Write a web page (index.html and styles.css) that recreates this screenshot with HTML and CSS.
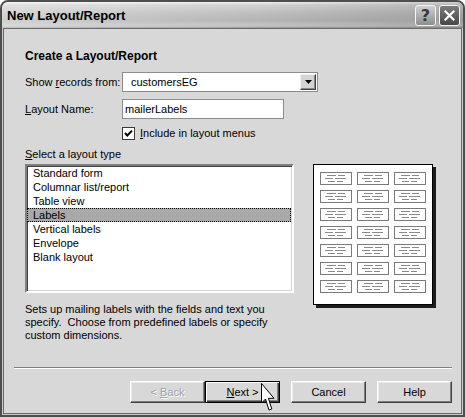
FILE: index.html
```html
<!DOCTYPE html>
<html>
<head>
<meta charset="utf-8">
<title>New Layout/Report</title>
<link rel="stylesheet" href="styles.css">
</head>
<body>
<svg width="0" height="0" class="defs" aria-hidden="true">
  <symbol id="lblLines" viewBox="0 0 30 11">
    <g stroke="#8a8a8a" stroke-width="1">
      <path d="M6 2.5H15M17 2.5H24"/>
      <path d="M4 5.5H12M14 5.5H25"/>
      <path d="M7 8.5H14M16 8.5H22"/>
    </g>
  </symbol>
</svg>
<div class="window">
  <div class="titlebar">
    <span class="title">New Layout/Report</span>
    <div class="tbtns">
      <span class="tb help">?</span>
      <span class="tb close"><svg width="11" height="11" viewBox="0 0 11 11"><path d="M1.5 1.5L9.5 9.5M9.5 1.5L1.5 9.5" stroke="#fff" stroke-width="2.2" stroke-linecap="square"/></svg></span>
    </div>
  </div>
  <div class="body">
    <div class="content">
      <div class="main">
        <div class="heading">Create a Layout/Report</div>
        <div class="form">
          <span class="flabel">Show <u>r</u>ecords from:</span>
          <div class="select"><span>customersEG</span><span class="dd"><svg width="7" height="4" viewBox="0 0 7 4"><polygon points="0,0 7,0 3.5,4" fill="#000"/></svg></span></div>
          <span class="flabel"><u>L</u>ayout Name:</span>
          <div class="input">mailerLabels</div>
          <span></span>
          <div class="check"><span class="box"><svg width="11" height="11" viewBox="0 0 11 11"><path d="M2 5L4.3 7.5L9 2.6" fill="none" stroke="#000" stroke-width="2"/></svg></span><span><u>I</u>nclude in layout menus</span></div>
        </div>
        <div class="types">
          <div class="types-label"><u>S</u>elect a layout type</div>
          <div class="list">
            <div class="item">Standard form</div>
            <div class="item">Columnar list/report</div>
            <div class="item">Table view</div>
            <div class="item sel">Labels</div>
            <div class="item">Vertical labels</div>
            <div class="item">Envelope</div>
            <div class="item">Blank layout</div>
          </div>
          <div class="preview">
            <div class="paper">
              <span class="lbl"><svg><use href="#lblLines"/></svg></span><span class="lbl"><svg><use href="#lblLines"/></svg></span><span class="lbl"><svg><use href="#lblLines"/></svg></span>
              <span class="lbl"><svg><use href="#lblLines"/></svg></span><span class="lbl"><svg><use href="#lblLines"/></svg></span><span class="lbl"><svg><use href="#lblLines"/></svg></span>
              <span class="lbl"><svg><use href="#lblLines"/></svg></span><span class="lbl"><svg><use href="#lblLines"/></svg></span><span class="lbl"><svg><use href="#lblLines"/></svg></span>
              <span class="lbl"><svg><use href="#lblLines"/></svg></span><span class="lbl"><svg><use href="#lblLines"/></svg></span><span class="lbl"><svg><use href="#lblLines"/></svg></span>
              <span class="lbl"><svg><use href="#lblLines"/></svg></span><span class="lbl"><svg><use href="#lblLines"/></svg></span><span class="lbl"><svg><use href="#lblLines"/></svg></span>
              <span class="lbl"><svg><use href="#lblLines"/></svg></span><span class="lbl"><svg><use href="#lblLines"/></svg></span><span class="lbl"><svg><use href="#lblLines"/></svg></span>
              <span class="lbl"><svg><use href="#lblLines"/></svg></span><span class="lbl"><svg><use href="#lblLines"/></svg></span><span class="lbl"><svg><use href="#lblLines"/></svg></span>
            </div>
          </div>
          <p class="desc">Sets up mailing labels with the fields and text you<br>specify.&nbsp; Choose from predefined labels or specify<br>custom dimensions.</p>
        </div>
      </div>
      <div class="footer">
        <div class="sep"></div>
        <div class="buttons">
          <span class="btn disabled">&lt; <u>B</u>ack</span>
          <span class="btn default"><u>N</u>ext &gt;</span>
          <span class="btn gap">Cancel</span>
          <span class="btn gap">Help</span>
        </div>
      </div>
    </div>
  </div>
  <svg class="cursor" width="14" height="28" viewBox="0 0 14 28"><path d="M0.5 0.5V20L4.5 16L8 27L10.8 26L7.4 15.3H13Z" fill="#fff" stroke="#000" stroke-width="1" stroke-linejoin="miter"/></svg>
</div>
</body>
</html>
```

FILE: styles.css
```css
* { box-sizing: border-box; }
html, body { margin: 0; padding: 0; }
body {
  width: 465px;
  height: 417px;
  overflow: hidden;
  background: #fff;
  font-family: "Liberation Sans", Arial, sans-serif;
  font-size: 11px;
  color: #000;
}
.defs { position: absolute; }
.window {
  position: relative;
  width: 465px;
  height: 417px;
  display: flex;
  flex-direction: column;
  border: 2px solid #4e4e4e;
  border-radius: 8px 8px 0 0;
  background: #d8d8d8;
}
.titlebar {
  height: 26px;
  flex: none;
  display: flex;
  align-items: center;
  padding: 0 3px 0 5px;
  border-radius: 6px 6px 0 0;
  background:
    linear-gradient(to right, rgba(255,255,255,0.35), rgba(255,255,255,0) 55%, rgba(0,0,0,0.14)),
    linear-gradient(to bottom, #f2f2f2 0, #d2d2d2 3px, #bebebe 45%, #b5b5b5 70%, #c6c6c6 92%, #9a9a9a 100%);
}
.title { flex: 1; font-weight: bold; font-size: 13px; }
.tbtns { display: flex; gap: 3px; }
.tb {
  width: 21px;
  height: 21px;
  border: 1px solid #f4f4f4;
  border-radius: 3px;
  display: flex;
  align-items: center;
  justify-content: center;
}
.tb.help {
  background: linear-gradient(#cfcfcf, #8e8e8e);
  color: #3a3a3a;
  font-weight: bold;
  font-size: 16px;
  font-family: "DejaVu Sans", sans-serif;
}
.tb.close { background: linear-gradient(#7c7c7c, #474747); }
.body {
  flex: 1;
  display: flex;
  border: 1px solid #c8c8c8;
  border-top: 0;
}
.content {
  flex: 1;
  display: flex;
  flex-direction: column;
  border: 1px solid #6a6a6a;
}
.main { padding: 21px 0 0 21px; }
.heading { font-weight: bold; line-height: 13px; font-size: 12px; }
.form {
  display: grid;
  grid-template-columns: 97px auto;
  grid-template-rows: 20px 20px 14px;
  row-gap: 7px;
  margin-top: 9px;
  align-items: center;
  justify-items: start;
}
.select {
  width: 196px;
  height: 20px;
  display: flex;
  align-items: center;
  padding: 1px 1px 1px 8px;
  border: 1px solid #8c8c8c;
  background: #fff;
}
.dd {
  margin-left: auto;
  width: 16px;
  height: 16px;
  display: flex;
  align-items: center;
  justify-content: center;
  background: #d4d4d4;
  border: 1px solid;
  border-color: #f0f0f0 #404040 #404040 #f0f0f0;
  box-shadow: inset -1px -1px #888;
}
.input {
  width: 162px;
  height: 20px;
  padding: 0 2px;
  line-height: 18px;
  border: 1px solid #8c8c8c;
  background: #fff;
}
.check { align-self: end; display: flex; align-items: center; gap: 5px; line-height: 13px; }
.box {
  width: 13px;
  height: 13px;
  border: 1px solid #3a3a3a;
  background: #fff;
  display: flex;
}
.types {
  display: grid;
  grid-template-columns: 269px 120px;
  column-gap: 19px;
  margin-top: 8px;
  align-items: start;
}
.types-label { line-height: 13px; margin-bottom: 3px; grid-column: 1; }
.list {
  grid-column: 1;
  height: 129px;
  background: #fff;
  border: 2px solid;
  border-color: #808080 #fff #fff #808080;
  box-shadow: inset 1px 1px #404040, inset -1px -1px #d4d4d4;
  padding: 0 1px 0 0;
}
.item { line-height: 14px; height: 14px; padding-left: 6px; }
.item.sel {
  background: #a9a9a9;
  border: 1px dotted #000;
  line-height: 12px;
  padding-left: 5px;
}
.preview { grid-column: 2; grid-row: 2 / span 2; }
.paper {
  width: 120px;
  height: 141px;
  background: #fff;
  border: 1px solid #000;
  box-shadow: 3px 3px 0 #1c1c1c;
  display: grid;
  grid-template-columns: repeat(3, 32px);
  grid-auto-rows: 13px;
  column-gap: 5px;
  row-gap: 5px;
  padding: 7px 6px;
  align-content: start;
}
.lbl { border: 1px solid #7a7a7a; display: block; }
.lbl svg { display: block; width: 30px; height: 11px; }
.desc { grid-column: 1; margin: 10px 0 0; line-height: 13px; white-space: nowrap; }
.footer { margin-top: auto; padding: 0 9px 10px 10px; }
.sep { border-top: 1px solid #808080; border-bottom: 1px solid #fff; }
.buttons { display: flex; justify-content: flex-end; margin-top: 12px; }
.btn {
  width: 75px;
  height: 22px;
  line-height: 20px;
  text-align: center;
  background: #d8d8d8;
  border: 1px solid;
  border-color: #fff #404040 #404040 #fff;
  box-shadow: inset -1px -1px #808080, inset 1px 1px #ececec;
}
.btn.gap { margin-left: 11px; }
.btn.disabled { color: #a2a2a2; text-shadow: 1px 1px 0 #fff; }
.btn.default {
  border: 1px solid #000;
  box-shadow: inset 1px 1px #fff, inset -1px -1px #404040, inset -2px -2px #808080;
}
.cursor { position: absolute; left: 259px; top: 381px; }
```
